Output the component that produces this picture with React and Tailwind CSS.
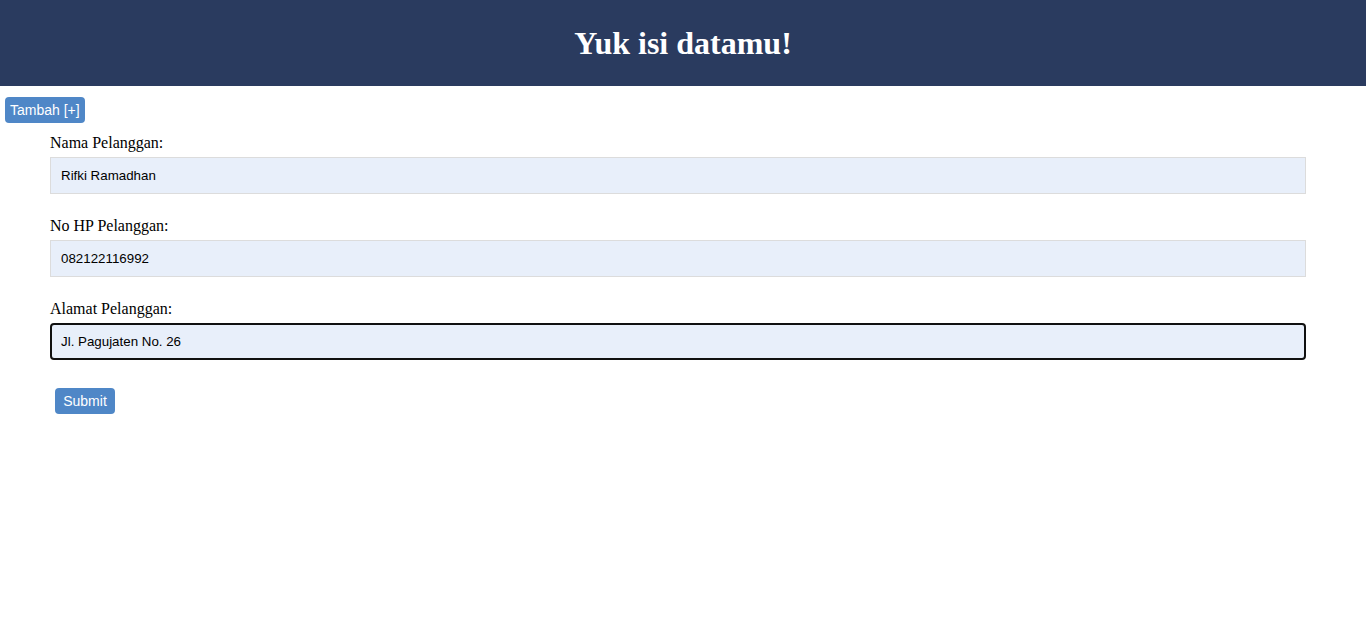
import { useState } from 'react';

function Field({ label, value, onChange, focused }) {
  return (
    <div className="flex flex-col">
      <label className="text-[16px] leading-[18px] text-black font-['Liberation_Serif',serif]">{label}</label>
      <input
        type="text"
        value={value}
        onChange={(e) => onChange(e.target.value)}
        className={
          focused
            ? "mt-[5px] h-[37px] px-[9px] text-[13.33px] font-['Liberation_Sans',Arial,sans-serif] text-black bg-[#e8effa] border-2 border-[#101010] rounded-[4px] outline-none"
            : "mt-[5px] h-[37px] px-[10px] text-[13.33px] font-['Liberation_Sans',Arial,sans-serif] text-black bg-[#e8effa] border border-[#dcdcdc] outline-none"
        }
      />
    </div>
  );
}

export default function App() {
  const [nama, setNama] = useState('Rifki Ramadhan');
  const [hp, setHp] = useState('082122116992');
  const [alamat, setAlamat] = useState('Jl. Pagujaten No. 26');

  return (
    <div className="min-h-[633px] bg-white font-['Liberation_Serif',serif]">
      <header className="h-[86px] bg-[#2a3b5f] flex items-center justify-center">
        <h1 className="text-[32px] font-bold text-white leading-none">Yuk isi datamu!</h1>
      </header>

      <div className="pl-[5px] pt-[11px]">
        <button
          type="button"
          className="h-[26px] px-[5px] rounded-[4px] bg-[#4f87c7] text-white text-[14px] font-['Liberation_Sans',Arial,sans-serif]"
        >
          Tambah [+]
        </button>
      </div>

      <form onSubmit={(e) => e.preventDefault()} className="pl-[50px] pt-[11px] w-[1306px]">
        <div className="flex flex-col gap-[23px]">
          <Field label="Nama Pelanggan:" value={nama} onChange={setNama} />
          <Field label="No HP Pelanggan:" value={hp} onChange={setHp} />
          <Field label="Alamat Pelanggan:" value={alamat} onChange={setAlamat} focused />
        </div>
        <button
          type="submit"
          className="mt-[28px] ml-[5px] h-[26px] w-[60px] rounded-[4px] bg-[#4f87c7] text-white text-[14px] font-['Liberation_Sans',Arial,sans-serif]"
        >
          Submit
        </button>
      </form>
    </div>
  );
}
